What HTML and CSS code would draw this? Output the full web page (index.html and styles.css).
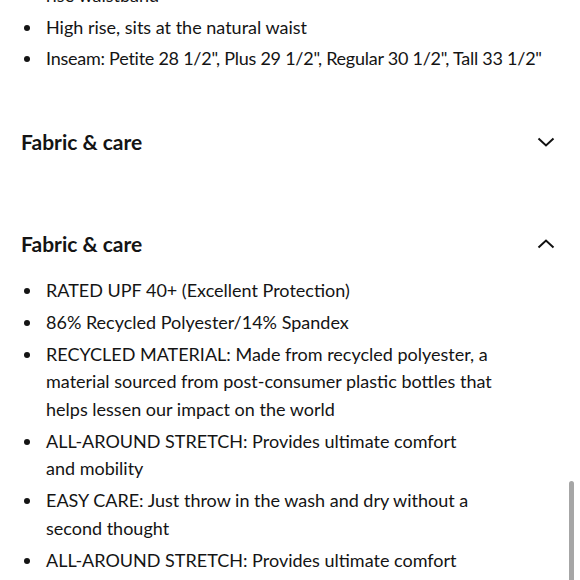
FILE: index.html
```html
<!DOCTYPE html>
<html>
<head>
<meta charset="utf-8">
<link rel="stylesheet" href="styles.css">
</head>
<body>
<div class="page">
  <ul class="bullets top-list">
    <li class="cont">rise waistband</li>
    <li>High rise, sits at the natural waist</li>
    <li class="nowrap">Inseam: Petite 28 1/2", Plus 29 1/2", Regular 30 1/2", Tall 33 1/2"</li>
  </ul>

  <section class="acc">
    <div class="acc-head">
      <h2 class="acc-title">Fabric &amp; care</h2>
      <svg class="chev" width="18" height="10" viewBox="0 0 18 10"><path d="M1.5 1.5 L9 8.5 L16.5 1.5" fill="none" stroke="#111" stroke-width="2"/></svg>
    </div>
  </section>

  <section class="acc open">
    <div class="acc-head">
      <h2 class="acc-title">Fabric &amp; care</h2>
      <svg class="chev" width="18" height="10" viewBox="0 0 18 10"><path d="M1.5 8.5 L9 1.5 L16.5 8.5" fill="none" stroke="#111" stroke-width="2"/></svg>
    </div>
    <ul class="bullets acc-body">
      <li>RATED UPF 40+ (Excellent Protection)</li>
      <li>86% Recycled Polyester/14% Spandex</li>
      <li>RECYCLED MATERIAL: Made from recycled polyester, a<br>material sourced from post-consumer plastic bottles that<br>helps lessen our impact on the world</li>
      <li>ALL-AROUND STRETCH: Provides ultimate comfort<br>and mobility</li>
      <li>EASY CARE: Just throw in the wash and dry without a<br>second thought</li>
      <li>ALL-AROUND STRETCH: Provides ultimate comfort<br>and mobility</li>
    </ul>
  </section>
</div>
<div class="scrollbar"></div>
</body>
</html>
```

FILE: styles.css
```css
html, body {
  margin: 0;
  padding: 0;
  background: #fff;
  height: 580px;
  overflow: hidden;
}
body {
  font-family: Lato, "Open Sans", sans-serif;
  color: #141414;
}
.page {
  padding: 0 26px 0 21px;
  margin-top: -18px;
}
.bullets {
  list-style: none;
  margin: 0;
  padding: 0 0 0 3px;
  display: flex;
  flex-direction: column;
  gap: 4px;
}
.bullets li {
  display: grid;
  grid-template-columns: 22px 1fr;
  font-size: 18px;
  line-height: 27.5px;
}
.bullets li.nowrap {
  white-space: nowrap;
  letter-spacing: -0.25px;
}
.bullets li::before {
  content: "";
  width: 6px;
  height: 6px;
  border-radius: 50%;
  background: #141414;
  margin-top: 11px;
}
.bullets li.cont::before {
  background: transparent;
}
.top-list {
  margin-bottom: 55px;
}
.acc + .acc {
  margin-top: 74px;
}
.acc-head {
  display: flex;
  justify-content: space-between;
  align-items: center;
  height: 28px;
}
.acc-title {
  margin: 0;
  font-size: 21px;
  font-weight: 700;
  line-height: 28px;
}
.chev {
  display: block;
  margin-right: -1px;
}
.acc-body {
  margin-top: 19px;
  gap: 4.5px;
}
.scrollbar {
  position: fixed;
  right: 6px;
  top: 481px;
  width: 5px;
  height: 110px;
  border-radius: 3px;
  background: #a6a6a6;
}
```
